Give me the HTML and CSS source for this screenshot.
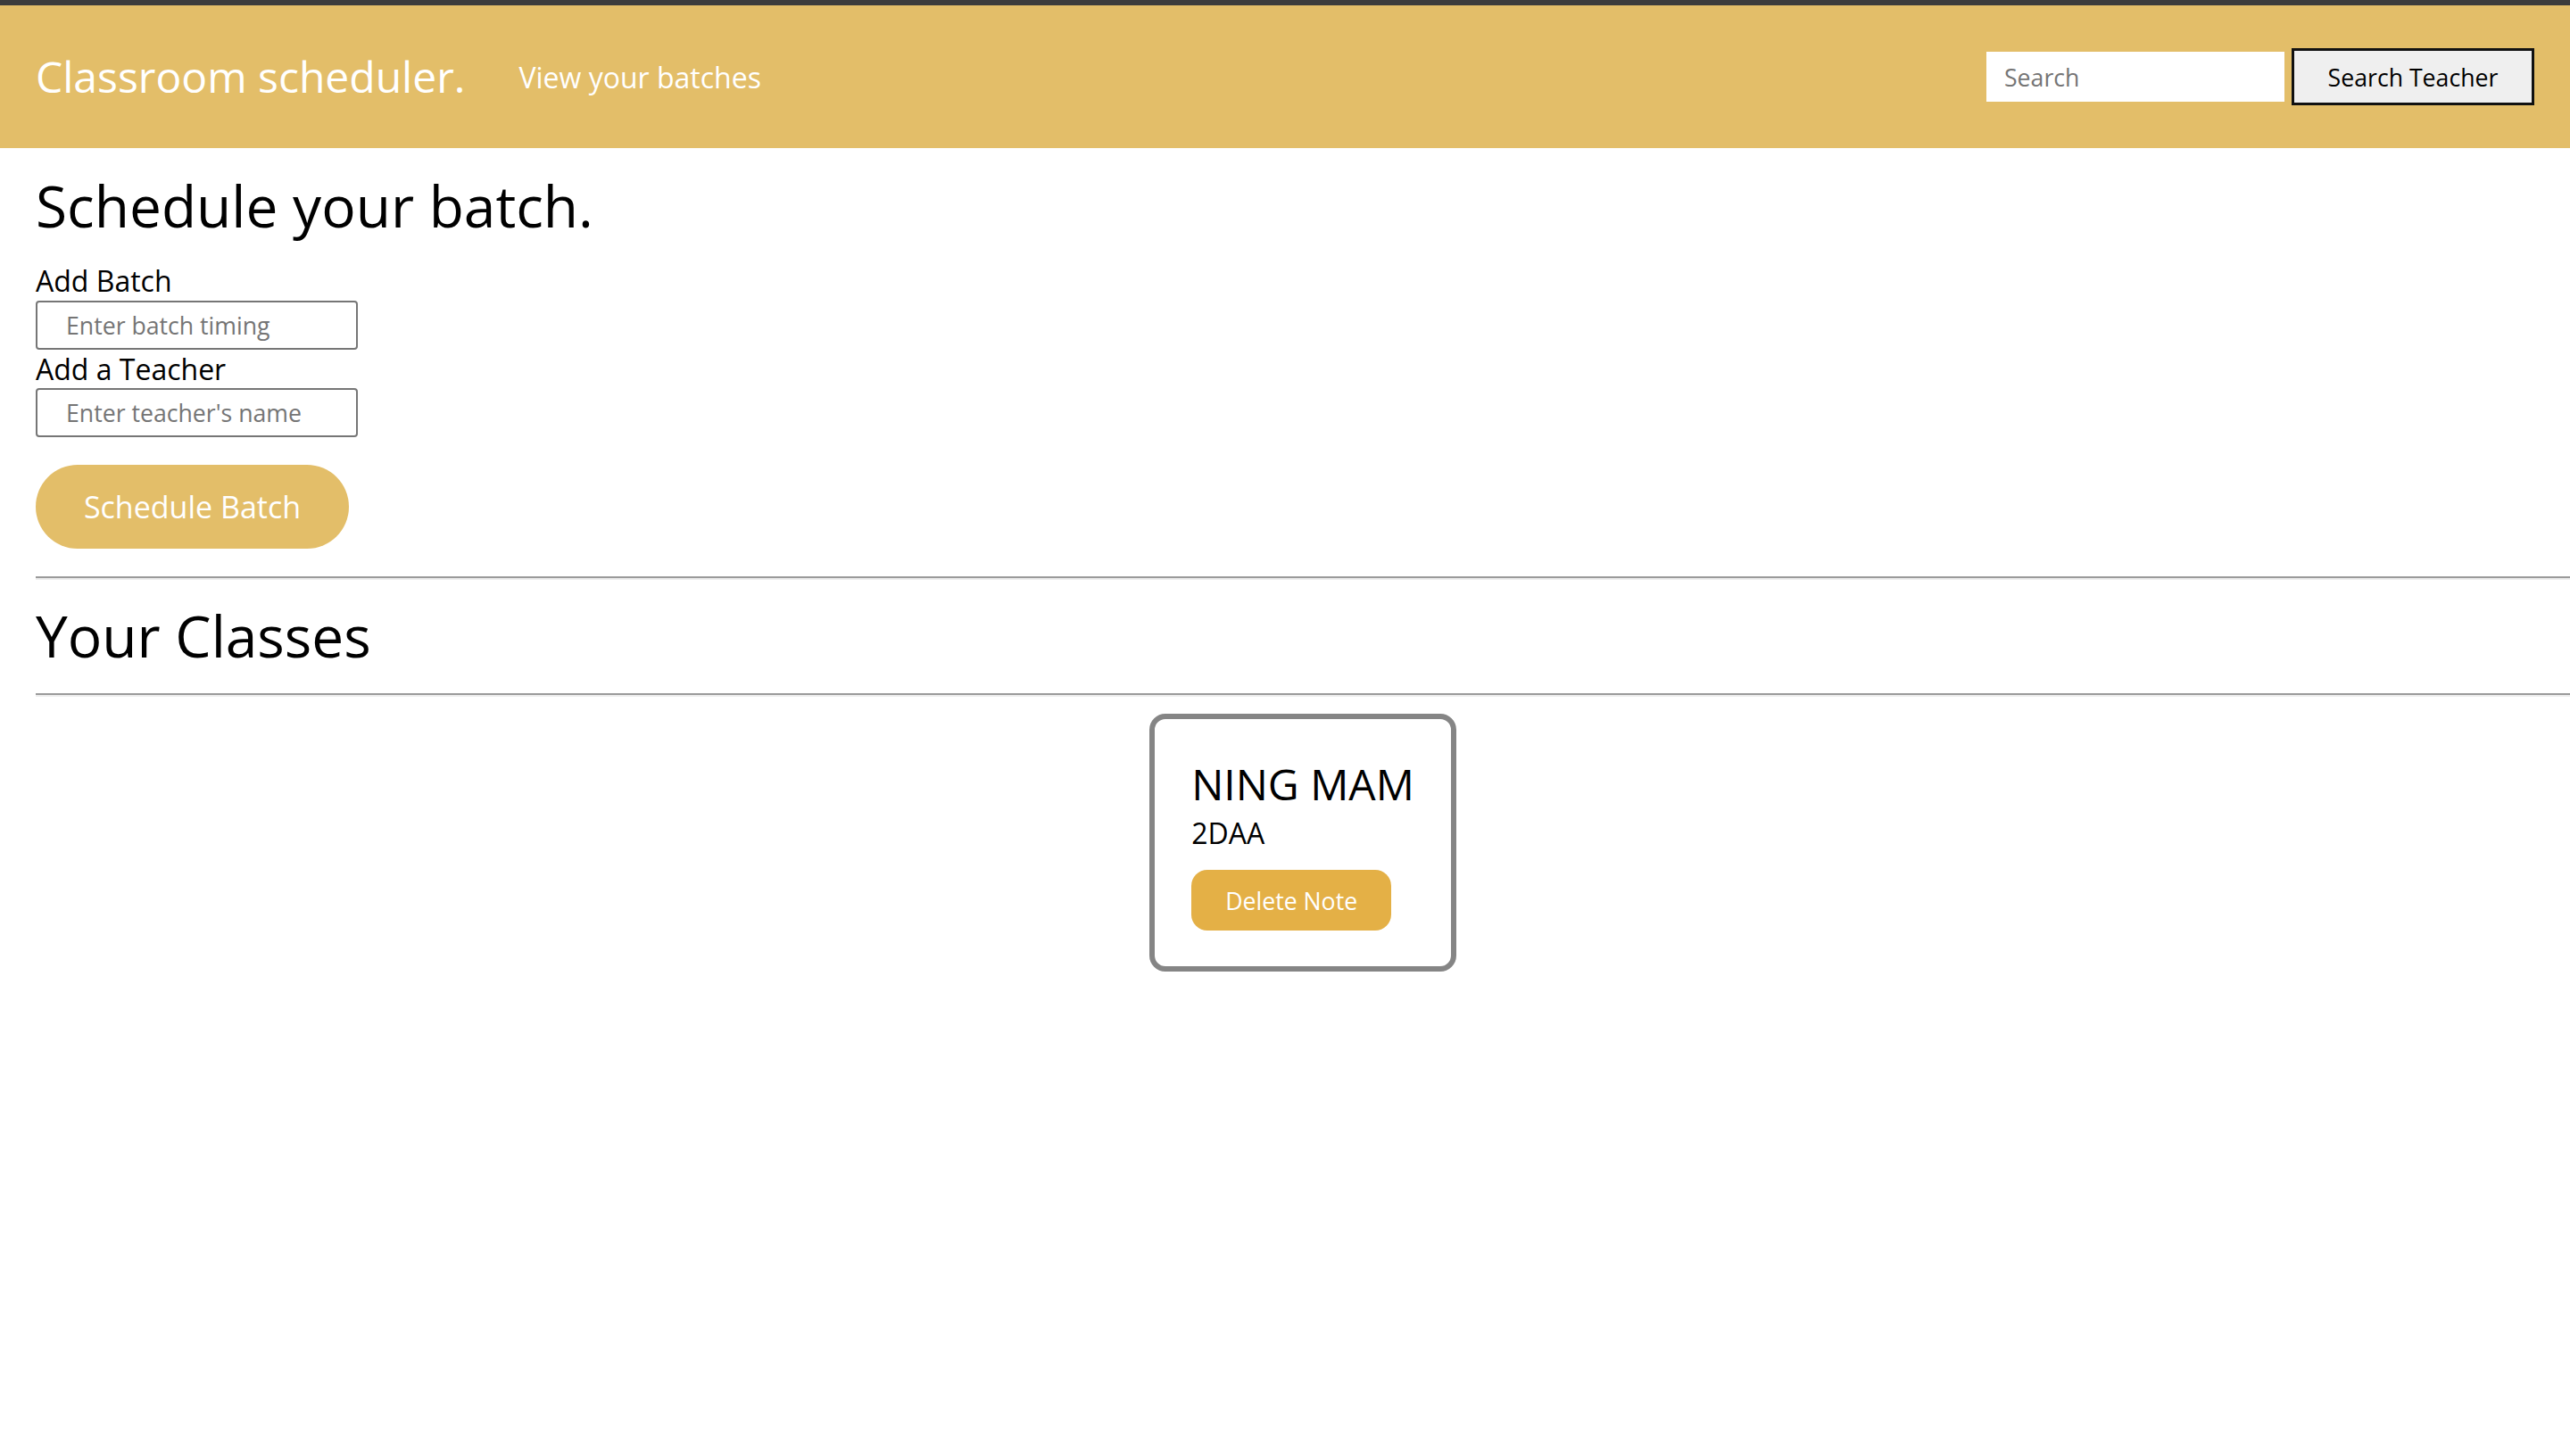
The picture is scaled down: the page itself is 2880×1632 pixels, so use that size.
FILE: index.html
```html
<!DOCTYPE html>
<html lang="en">
<head>
<meta charset="utf-8">
<title>Classroom scheduler</title>
<link rel="stylesheet" href="styles.css">
</head>
<body>
<header class="navbar">
  <div class="nav-left">
    <a class="brand" href="#">Classroom scheduler.</a>
    <a class="nav-link" href="#">View your batches</a>
  </div>
  <form class="search-form">
    <input class="search-input" type="text" placeholder="Search">
    <button class="search-btn" type="button">Search Teacher</button>
  </form>
</header>
<main class="main">
  <h1 class="title">Schedule your batch.</h1>
  <form class="batch-form">
    <label class="field-label">Add Batch</label>
    <input class="field-input" type="text" placeholder="Enter batch timing">
    <label class="field-label">Add a Teacher</label>
    <input class="field-input" type="text" placeholder="Enter teacher's name">
    <button class="schedule-btn" type="button">Schedule Batch</button>
  </form>
  <hr class="divider divider-top">
  <h2 class="section-title">Your Classes</h2>
  <hr class="divider divider-bottom">
  <div class="cards">
    <div class="card">
      <div class="card-name">NING MAM</div>
      <div class="card-batch">2DAA</div>
      <button class="delete-btn" type="button">Delete Note</button>
    </div>
  </div>
</main>
</body>
</html>
```
FILE: styles.css
```css
* {
  box-sizing: border-box;
}

html, body {
  margin: 0;
  padding: 0;
  background: #ffffff;
}

body {
  font-family: "Open Sans", "Liberation Sans", sans-serif;
  color: #000000;
}

.navbar {
  border-top: 6px solid #3c3c3c;
  background: #e3be69;
  height: 166px;
  display: flex;
  align-items: center;
  justify-content: space-between;
  padding: 0 40px;
}

.nav-left {
  display: flex;
  align-items: center;
  gap: 60px;
}

.brand {
  color: #ffffff;
  text-decoration: none;
  font-size: 48px;
  line-height: 1.362;
}

.nav-link {
  color: #ffffff;
  text-decoration: none;
  font-size: 32px;
  line-height: 1.362;
  margin-top: 2px;
}

.search-form {
  display: flex;
  align-items: center;
  gap: 8px;
  margin: 0;
}

.search-input {
  width: 334px;
  height: 56px;
  border: none;
  background: #ffffff;
  padding: 0 20px;
  font-family: "Open Sans", "Liberation Sans", sans-serif;
  font-size: 26.67px;
  color: #000;
  outline: none;
}

.search-input::placeholder {
  color: #757575;
}

.search-btn {
  width: 272px;
  height: 64px;
  border: 3px solid #111111;
  background: #efefef;
  color: #000000;
  font-family: "Open Sans", "Liberation Sans", sans-serif;
  font-size: 26.67px;
  padding: 0;
  border-radius: 0;
}

.main {
  padding-left: 40px;
}

.title {
  margin: 21px 0 0 0;
  font-size: 64px;
  font-weight: 400;
  line-height: 1.362;
}

.batch-form {
  display: flex;
  flex-direction: column;
  align-items: flex-start;
  margin-top: 19px;
}

.field-label {
  font-size: 32px;
  line-height: 1.362;
  margin-bottom: 0;
}

.field-input {
  width: 361px;
  height: 55px;
  border: 2px solid #767676;
  border-radius: 4px;
  padding: 0 32px;
  font-family: "Open Sans", "Liberation Sans", sans-serif;
  font-size: 26.67px;
  color: #000;
  background: #ffffff;
}

.field-input::placeholder {
  color: #757575;
}

.schedule-btn {
  margin-top: 31px;
  width: 351px;
  height: 94px;
  border: none;
  border-radius: 47px;
  background: #e3be69;
  color: #ffffff;
  font-family: "Open Sans", "Liberation Sans", sans-serif;
  font-size: 34px;
  padding: 0;
}

.divider {
  height: 0;
  margin: 0;
  border: none;
  border-top: 2px solid #9a9a9a;
  border-bottom: 2px solid #eeeeee;
}

.divider-top {
  margin-top: 31px;
}

.section-title {
  margin: 19px 0 0 0;
  font-size: 64px;
  font-weight: 400;
  line-height: 1.362;
}

.divider-bottom {
  margin-top: 21px;
}

.cards {
  display: flex;
  justify-content: center;
  margin-top: 19px;
}

.card {
  border: 6px solid #858585;
  border-radius: 18px;
  padding: 40px 41px 40px 41px;
  display: flex;
  flex-direction: column;
  align-items: flex-start;
}

.card-name {
  font-size: 48px;
  line-height: 1.362;
}

.card-batch {
  font-size: 32px;
  line-height: 1.362;
}

.delete-btn {
  margin-top: 20px;
  width: 224px;
  height: 68px;
  border: none;
  border-radius: 18px;
  background: #e4b046;
  color: #ffffff;
  font-family: "Open Sans", "Liberation Sans", sans-serif;
  font-size: 26.67px;
  padding: 0;
}
```
